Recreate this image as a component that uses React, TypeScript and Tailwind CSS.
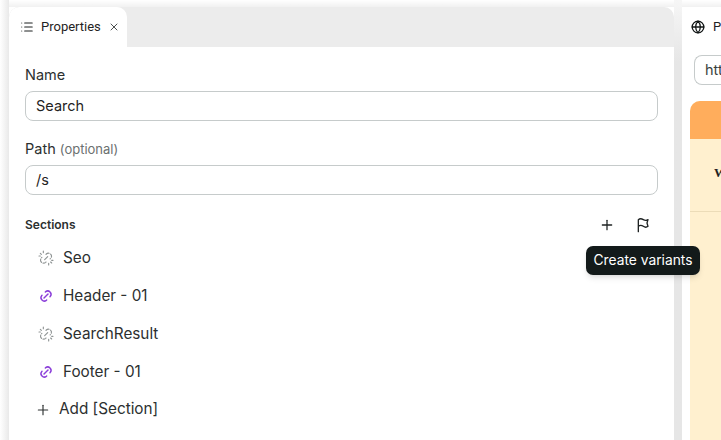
import { Plus, Globe, X, List } from "lucide-react";

const font = { fontFamily: '"Inter", sans-serif' };

function LinkIcon({ broken }: { broken: boolean }) {
  if (broken) {
    return (
      <svg width="16" height="16" viewBox="0 0 24 24" fill="none" stroke="#8f9494" strokeWidth="1.7" strokeLinecap="round" strokeLinejoin="round" className="shrink-0">
        <path d="M10 14.5l4.5-4.5" />
        <path d="M12 6.5l.5-.5a4.6 4.6 0 0 1 6.5 6.5l-.8.8" strokeDasharray="5 2.5" />
        <path d="M12 18l-.5.5a4.6 4.6 0 0 1-6.5-6.5l.8-.8" strokeDasharray="5 2.5" />
        <path d="M3.5 5l1.5 1.5M8 1.5v2.5M1.5 9H3.5M20.5 19.5l-1.5-1.5M16 22.5v-2.5M22.5 15.5h-2" />
      </svg>
    );
  }
  return (
    <svg width="16" height="16" viewBox="0 0 24 24" fill="none" stroke="#8b3fd9" strokeWidth="2.2" strokeLinecap="round" strokeLinejoin="round" className="shrink-0">
      <path d="M9 15l6-6" />
      <path d="M11 6l.5-.5a5 5 0 0 1 7 7l-.5.5" />
      <path d="M13 18l-.5.5a5 5 0 0 1-7-7l.5-.5" />
    </svg>
  );
}

function Row({ label, broken }: { label: string; broken: boolean }) {
  return (
    <div className="flex h-[38px] items-center gap-[9px] pl-[13px] text-[15.3px] text-[#2c3030]">
      <LinkIcon broken={broken} />
      <span>{label}</span>
    </div>
  );
}

function Field({ value }: { value: string }) {
  return (
    <div className="flex h-[30px] items-center rounded-[8px] border border-[#c6cbcb] bg-white pl-[10px] text-[14.5px] text-[#1f2323]">
      {value}
    </div>
  );
}

export default function App() {
  return (
    <div className="relative flex h-[440px] w-[721px] overflow-hidden bg-white" style={font}>
      <div className="w-[9px] shrink-0 bg-gradient-to-r from-white to-[#e9e9e9]" />
      <div className="flex w-[665px] shrink-0 flex-col">
        <div className="h-[7px] bg-gradient-to-b from-white to-[#f1f1f1]" />
        <div className="relative flex flex-1 flex-col rounded-t-[10px] bg-white">
          <div className="flex h-[40px] overflow-hidden rounded-t-[10px] bg-[#ececec]">
            <div className="flex w-[118px] items-center rounded-t-[10px] bg-white pl-[11px] text-[#1f2323]" style={{ fontFamily: '"Roboto", sans-serif' }}>
              <List size={14} strokeWidth={1.8} className="text-[#1f2323]" />
              <span className="ml-[7px] text-[13px]">Properties</span>
              <X size={12} strokeWidth={1.6} className="ml-[7px] text-[#1f2323]" />
            </div>
          </div>
          <div className="flex flex-col px-[16px] pt-[18px]">
            <div className="mb-[6px] h-[20px] text-[14.5px] leading-[20px] text-[#2c3030]">Name</div>
            <Field value="Search" />
            <div className="mb-[6px] mt-[17px] h-[21px] text-[14.5px] leading-[21px] text-[#2c3030]">
              Path <span className="text-[13px] text-[#6b7070]">(optional)</span>
            </div>
            <Field value="/s" />
            <div className="mb-[1px] mt-[16px] flex h-[27px] items-center justify-between">
              <span className="text-[12px] font-semibold text-[#2c3030]">Sections</span>
              <div className="flex items-center gap-[20px] pr-[7px] text-[#1f2323]">
                <Plus size={16} strokeWidth={1.9} />
                <svg width="16" height="16" viewBox="0 0 24 24" fill="none" stroke="currentColor" strokeWidth="2" strokeLinecap="round" strokeLinejoin="round">
                  <path d="M5 22V4c3-2.5 5-1.500 7.500 0s4.500 1.500 7 0l-1.500 5 1.500 5c-2.500 2-5 1.500-7 0s-5-2-7.500 0" />
                </svg>
              </div>
            </div>
            <Row label="Seo" broken />
            <Row label="Header - 01" broken={false} />
            <Row label="SearchResult" broken />
            <Row label="Footer - 01" broken={false} />
            <div className="flex h-[37px] items-center gap-[8px] pl-[10px] text-[15.3px] text-[#2c3030]">
              <Plus size={16} strokeWidth={1.7} />
              <span>Add [Section]</span>
            </div>
          </div>
        </div>
      </div>
      <div className="w-[8px] shrink-0 bg-gradient-to-b from-[#f6f6f6] to-[#e6e6e6] to-[14%]" />
      <div className="flex flex-1 flex-col">
        <div className="h-[7px] bg-gradient-to-b from-white to-[#f1f1f1]" />
        <div className="flex flex-1 flex-col rounded-tl-[10px] bg-white pl-[8px]">
          <div className="flex h-[40px] items-center gap-[8px] pl-[1px] text-[13px] text-[#1f2323]" style={{ fontFamily: '"Roboto", sans-serif' }}>
            <Globe size={14} strokeWidth={2.2} className="shrink-0 text-[#111515]" />
            <span>P</span>
          </div>
          <div className="mb-[16px] ml-[4px] mt-[8px] flex h-[30px] items-center rounded-l-[8px] border-y border-l border-[#c6cbcb] pl-[10px] text-[14.5px] text-[#3a3e3e]">
            <span className="w-[17px] overflow-hidden">https</span>
          </div>
          <div className="flex flex-1 flex-col overflow-hidden rounded-tl-[10px] bg-[#fff0cf]">
            <div className="h-[38px] shrink-0 bg-[#ffad5c]" />
            <div className="flex h-[73px] items-center border-b border-[#ecdcb8] pb-[5px] pl-[24px] text-[13px] font-semibold text-[#1f2323]" style={{ fontFamily: '"Liberation Serif", serif' }}>
              <span className="w-[7px] overflow-hidden">W</span>
            </div>
          </div>
        </div>
      </div>
      <div className="absolute left-[586px] top-[246px] flex h-[29px] w-[114px] items-center justify-center rounded-[7px] bg-[#131a1a] text-[13.8px] text-white shadow-md">
        Create variants
      </div>
    </div>
  );
}
